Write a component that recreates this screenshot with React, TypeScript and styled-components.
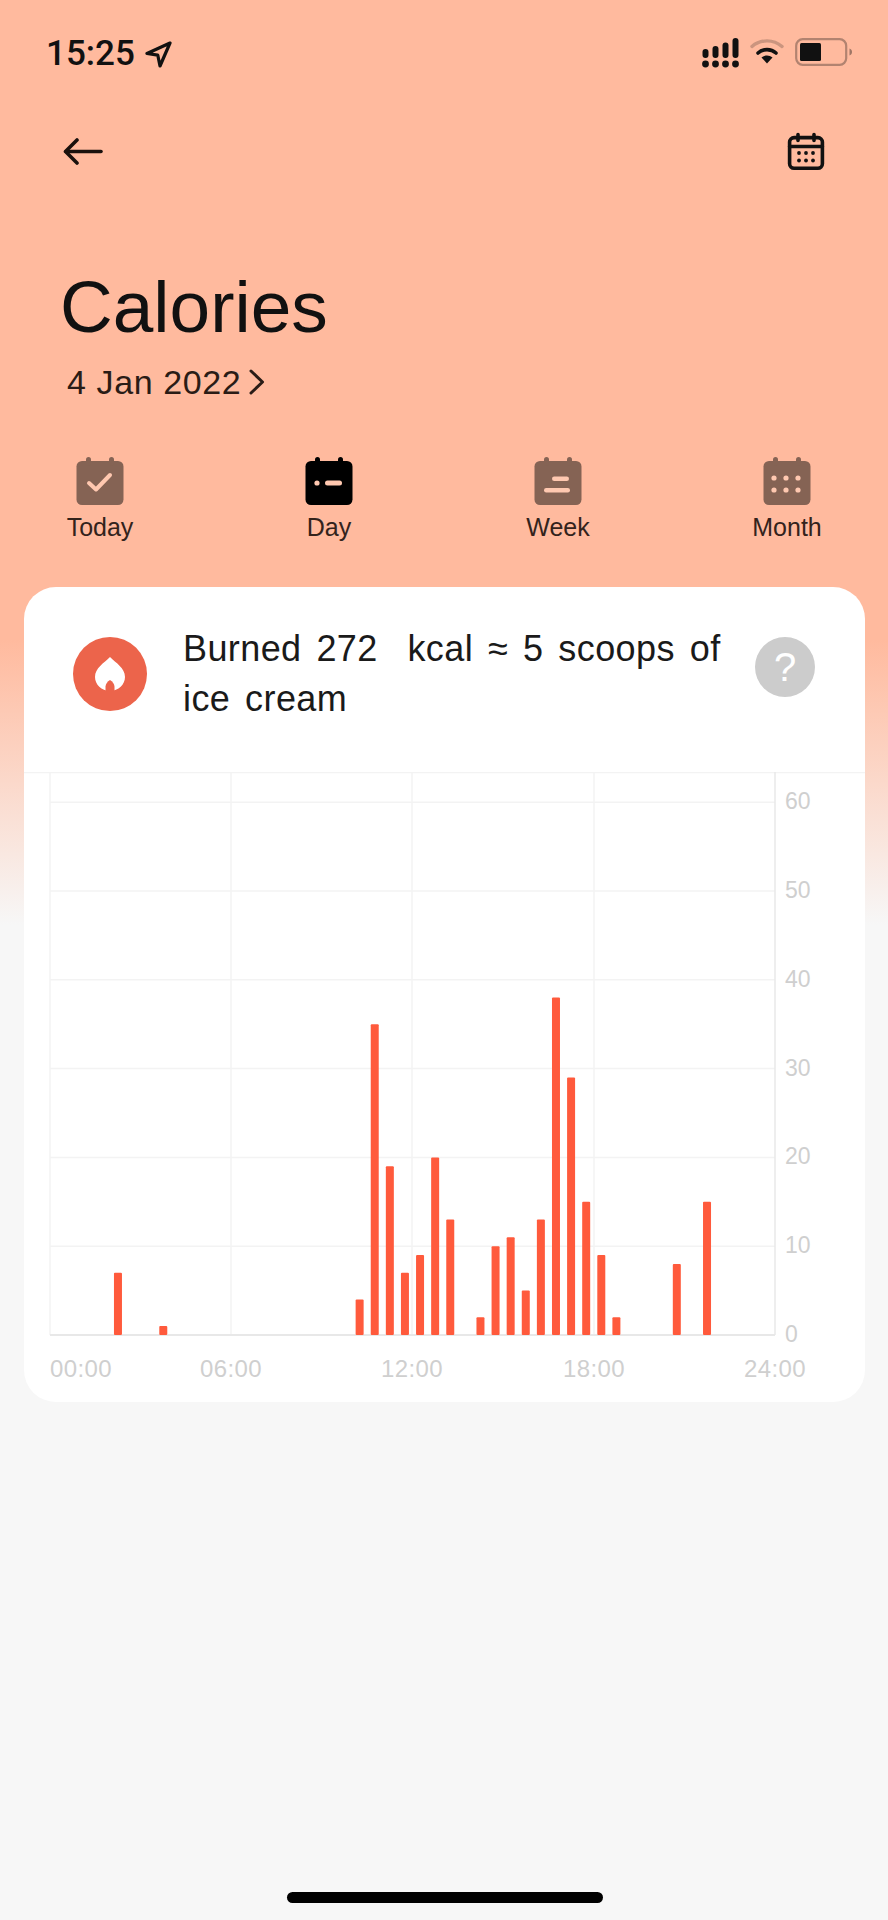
import { FC, ReactNode } from 'react';
import styled, { createGlobalStyle } from 'styled-components';

const GlobalStyle = createGlobalStyle`
  html, body {
    margin: 0;
    padding: 0;
    background: #f7f7f7;
  }
  * {
    box-sizing: border-box;
  }
`;

const Page = styled.div`
  width: 888px;
  height: 1920px;
  display: flex;
  flex-direction: column;
  overflow: hidden;
  font-family: 'Liberation Sans', Arial, sans-serif;
  color: #111;
  background: linear-gradient(to bottom, #ffba9e 0, #ffba9e 640px, #f7f7f7 925px);
`;

const StatusBar = styled.div`
  height: 106px;
  padding: 38px 35px 0 46px;
  display: flex;
  justify-content: space-between;
  align-items: flex-start;
`;

const Clock = styled.div`
  display: flex;
  align-items: center;
  gap: 10px;
  height: 32px;
  font-family: Roboto, sans-serif;
  font-size: 35px;
  font-weight: 500;
  line-height: 32px;
`;

const StatusIcons = styled.div`
  display: flex;
  align-items: flex-start;
  gap: 11px;
`;

const NavBar = styled.div`
  height: 90px;
  padding: 0 63px 0 63px;
  display: flex;
  justify-content: space-between;
  align-items: center;
`;

const Title = styled.h1`
  margin: 69px 0 0 60px;
  font-size: 73px;
  line-height: 84px;
  font-weight: 400;
`;

const DateRow = styled.div`
  margin: 13px 0 0 67px;
  height: 40px;
  display: flex;
  align-items: center;
  gap: 8px;
  font-size: 34px;
  letter-spacing: 0.6px;
  color: #2a1c16;
`;

const Tabs = styled.div`
  margin-top: 55px;
  padding: 0 34px 0 33px;
  display: flex;
  justify-content: space-between;
`;

const Tab = styled.div`
  width: 134px;
  display: flex;
  flex-direction: column;
  align-items: center;
  gap: 8px;
  font-size: 25px;
  line-height: 28px;
  color: #33231c;
`;

const Card = styled.section`
  margin: 46px 23px 0 24px;
  height: 815px;
  background: #fff;
  border-radius: 32px;
  overflow: hidden;
`;

const CardHeader = styled.div`
  height: 185px;
  padding: 50px 50px 0 49px;
  display: flex;
  align-items: flex-start;
`;

const FlameBadge = styled.div`
  width: 74px;
  height: 74px;
  flex: none;
  border-radius: 50%;
  background: #ec644b;
  display: flex;
  align-items: center;
  justify-content: center;
`;

const Message = styled.p`
  width: 550px;
  margin: -13px 0 0 36px;
  font-size: 36px;
  line-height: 50px;
  letter-spacing: 0.4px;
  word-spacing: 4.5px;
  color: #1a1a1a;
`;

const Help = styled.div`
  width: 60px;
  height: 60px;
  flex: none;
  margin-left: auto;
  border-radius: 50%;
  background: #cccccc;
  color: #fff;
  font-size: 40px;
  line-height: 60px;
  text-align: center;
`;

const ChartSvg = styled.svg`
  display: block;
  width: 841px;
  height: 630px;
  font-family: 'Liberation Sans', Arial, sans-serif;
  font-size: 23px;
  fill: #cfcfcf;
`;

const TimeLabel = styled.text`
  font-size: 24px;
  letter-spacing: 0.4px;
`;

const HomeIndicator = styled.div`
  width: 316px;
  height: 11px;
  flex: none;
  margin: auto 0 17px 287px;
  border-radius: 6px;
  background: #000;
`;

const BAR_COLOR = '#ff5a3c';
const GRID_COLOR = '#f3f3f3';
const AXIS_COLOR = '#e8e8e8';
const BASELINE = 1335;
const UNIT = 8.88;
const SLOT = 15.104;
const LEFT = 50;
const RIGHT = 775;

// kcal per half hour slot, these add up to the 272 in the header
const slots: Record<number, number> = {
  4: 7, 7: 1, 20: 4, 21: 35, 22: 19, 23: 7, 24: 9, 25: 20, 26: 13, 28: 2, 29: 10,
  30: 11, 31: 5, 32: 13, 33: 38, 34: 29, 35: 15, 36: 9, 37: 2, 41: 8, 43: 15,
};

const yTicks = [0, 10, 20, 30, 40, 50, 60];
const xTicks = [
  { label: '00:00', x: LEFT, anchor: 'start' },
  { label: '06:00', x: 231, anchor: 'middle' },
  { label: '12:00', x: 412, anchor: 'middle' },
  { label: '18:00', x: 594, anchor: 'middle' },
  { label: '24:00', x: RIGHT, anchor: 'middle' },
];

const Chart: FC = () => (
  <ChartSvg viewBox='24 772 841 630'>
    <line x1='24' y1='772.5' x2='865' y2='772.5' stroke={GRID_COLOR} strokeWidth='1.5' />
    {[LEFT, 231, 412, 594].map((x) => (
      <line key={x} x1={x} y1='772' x2={x} y2={BASELINE} stroke={GRID_COLOR} strokeWidth='1.5' />
    ))}
    {yTicks.slice(1).map((t) => (
      <line
        key={t}
        x1={LEFT}
        y1={BASELINE - t * UNIT}
        x2={RIGHT}
        y2={BASELINE - t * UNIT}
        stroke={GRID_COLOR}
        strokeWidth='1.5'
      />
    ))}
    <line x1={RIGHT} y1='772' x2={RIGHT} y2={BASELINE} stroke={AXIS_COLOR} strokeWidth='1.5' />
    <line x1={LEFT} y1={BASELINE} x2={RIGHT} y2={BASELINE} stroke={AXIS_COLOR} strokeWidth='2' />
    {Object.entries(slots).map(([slot, value]) => (
      <rect
        key={slot}
        x={LEFT + (Number(slot) + 0.5) * SLOT - 4}
        y={BASELINE - value * UNIT}
        width='8'
        height={value * UNIT}
        rx='1'
        fill={BAR_COLOR}
      />
    ))}
    {yTicks.map((t) => (
      <text key={t} x='785' y={BASELINE - t * UNIT + 7}>
        {t}
      </text>
    ))}
    {xTicks.map((t) => (
      <TimeLabel key={t.label} x={t.x} y='1377' textAnchor={t.anchor}>
        {t.label}
      </TimeLabel>
    ))}
  </ChartSvg>
);

const LocationArrow: FC = () => (
  <svg width='27' height='27' viewBox='0 0 27 27' fill='none' stroke='#111' strokeWidth='3.2' strokeLinejoin='round'>
    <path d='M25 2 2 12.5l10.8 1.7L15 25z' />
  </svg>
);

const SignalIcon: FC = () => (
  <svg width='37' height='30' viewBox='0 0 37 30' fill='#111'>
    {[3.5, 13.5, 23.5, 33.5].map((x) => (
      <circle key={x} cx={x} cy='26' r='3.4' />
    ))}
    <rect x='0.5' y='11' width='6' height='9' rx='3' />
    <rect x='10.5' y='8' width='6' height='12' rx='3' />
    <rect x='20.5' y='4.5' width='6' height='15.5' rx='3' />
    <rect x='30.5' y='0' width='6' height='20' rx='3' />
  </svg>
);

const WifiIcon: FC = () => (
  <svg width='34' height='26' viewBox='0 0 34 26' fill='none'>
    <path d='M2 8.5c8.5-7.500 21.500-7.500 30 0' stroke='#111' strokeOpacity='0.22' strokeWidth='3.4' strokeLinecap='round' />
    <path d='M8 15c5-4.500 13-4.500 18 0' stroke='#111' strokeWidth='3.6' strokeLinecap='round' />
    <path d='M17 25.500l-5.500-6c3-2.700 8-2.700 11 0z' fill='#111' />
  </svg>
);

const BatteryIcon: FC = () => (
  <svg width='58' height='28' viewBox='0 0 58 28' fill='none'>
    <rect x='1.200' y='1.200' width='50' height='25.600' rx='6.500' stroke='#111' strokeOpacity='0.32' strokeWidth='2.200' />
    <rect x='5' y='5' width='21' height='18' rx='1.500' fill='#111' />
    <path d='M54.500 10.500c2 .8 2.500 2 2.500 3.500s-.5 2.700-2.500 3.500z' fill='#111' fillOpacity='0.4' />
  </svg>
);

const BackIcon: FC = () => (
  <svg width='40' height='27' viewBox='0 0 40 27' fill='none' stroke='#1a110d' strokeWidth='3.6' strokeLinecap='round' strokeLinejoin='round'>
    <path d='M38 13.500H3' />
    <path d='M14 2 2.500 13.500 14 25' />
  </svg>
);

const CalendarLine: FC = () => (
  <svg width='38' height='38' viewBox='0 0 38 38' fill='none' stroke='#111' strokeWidth='3.600' strokeLinecap='round'>
    <rect x='2.600' y='5.600' width='32.800' height='30.600' rx='4.500' />
    <path d='M2.600 14.500h32.800M11 2.500v6M27 2.500v6' />
    <g fill='#111' stroke='none'>
      {[12, 19, 26].flatMap((x) =>
        [21, 28.500].map((y) => <circle key={`${x}-${y}`} cx={x} cy={y} r='1.900' />),
      )}
    </g>
  </svg>
);

const CalendarFilled: FC<{ color: string; children: ReactNode }> = ({ color, children }) => (
  <svg width='48' height='48' viewBox='0 0 48 48' fill={color}>
    <rect x='0.500' y='4' width='47' height='44' rx='5.500' />
    <rect x='10' y='0' width='5' height='9' rx='2.500' />
    <rect x='33' y='0' width='5' height='9' rx='2.500' />
    {children}
  </svg>
);

const GLYPH = '#ffc8b0';

const CheckGlyph = () => (
  <path d='M13 26l7 6.500L34 18' fill='none' stroke={GLYPH} strokeWidth='4' strokeLinecap='round' strokeLinejoin='round' />
);
const DashGlyph = () => (
  <g fill={GLYPH}>
    <circle cx='12' cy='26' r='2.600' />
    <rect x='20' y='23.500' width='17' height='5' rx='2.500' />
  </g>
);
const LinesGlyph = () => (
  <g fill={GLYPH}>
    <rect x='18' y='19.500' width='17' height='4.500' rx='2.200' />
    <rect x='10' y='31' width='26' height='4.500' rx='2.200' />
  </g>
);
const DotsGlyph = () => (
  <g fill={GLYPH}>
    {[11, 23, 35].flatMap((x) =>
      [21, 33].map((y) => <circle key={`${x}-${y}`} cx={x} cy={y} r='2.600' />),
    )}
  </g>
);

const Chevron: FC = () => (
  <svg width='16' height='26' viewBox='0 0 16 26' fill='none' stroke='#2a1c16' strokeWidth='3' strokeLinecap='round' strokeLinejoin='round'>
    <path d='M2 2l11.500 11L2 24' />
  </svg>
);

const Flame: FC = () => (
  <svg width='30' height='34' viewBox='0 0 30 34' fill='none'>
    <path d='M15 0C9 6 0 11 0 20 0 27.500 6.500 34 15 34s15-6.500 15-14C30 11 21 6 15 0z' fill='#fff' />
    <path d='M10.500 34v-4.500c0-2.500 2-5 4.500-6.500 2.500 1.500 4.500 4 4.500 6.500V34z' fill='#ec644b' />
  </svg>
);

const tabs = [
  { label: 'Today', glyph: <CheckGlyph />, active: false },
  { label: 'Day', glyph: <DashGlyph />, active: true },
  { label: 'Week', glyph: <LinesGlyph />, active: false },
  { label: 'Month', glyph: <DotsGlyph />, active: false },
];

const App: FC = () => (
  <Page>
    <GlobalStyle />
    <StatusBar>
      <Clock>
        15:25
        <LocationArrow />
      </Clock>
      <StatusIcons>
        <SignalIcon />
        <WifiIcon />
        <BatteryIcon />
      </StatusIcons>
    </StatusBar>
    <NavBar>
      <BackIcon />
      <CalendarLine />
    </NavBar>
    <Title>Calories</Title>
    <DateRow>
      4 Jan 2022
      <Chevron />
    </DateRow>
    <Tabs>
      {tabs.map((tab) => (
        <Tab key={tab.label}>
          <CalendarFilled color={tab.active ? '#000' : '#856354'}>{tab.glyph}</CalendarFilled>
          {tab.label}
        </Tab>
      ))}
    </Tabs>
    <Card>
      <CardHeader>
        <FlameBadge>
          <Flame />
        </FlameBadge>
        <Message>Burned 272&nbsp; kcal ≈ 5 scoops of ice cream</Message>
        <Help>?</Help>
      </CardHeader>
      <Chart />
    </Card>
    <HomeIndicator />
  </Page>
);

export default App;
